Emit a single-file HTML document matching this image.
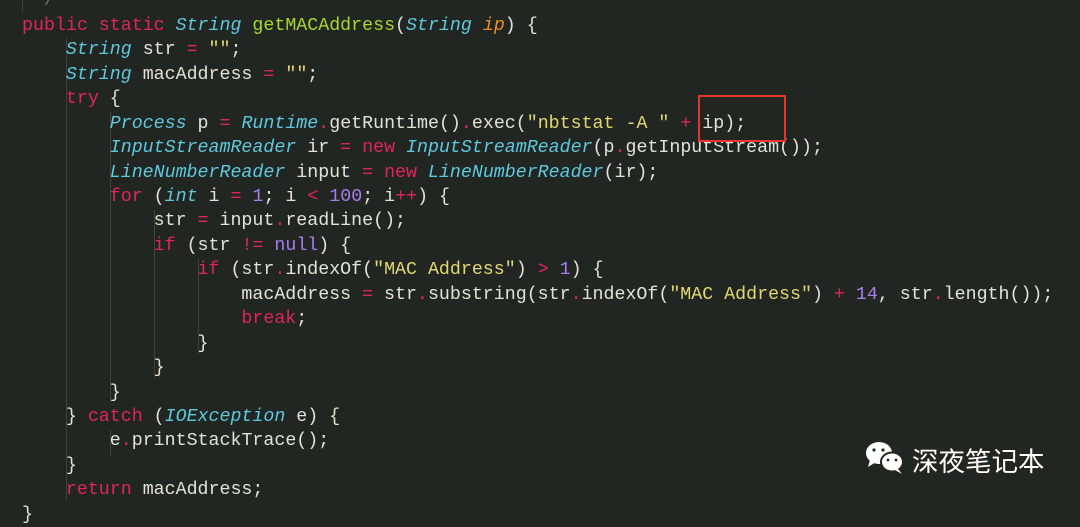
<!DOCTYPE html>
<html><head><meta charset="utf-8"><style>
html,body{margin:0;padding:0}
body{width:1080px;height:509px;background:#222622;overflow:hidden;position:relative;font-family:"Liberation Mono",monospace;font-size:18.3px;color:#e2e2da}
.l{position:absolute;left:22px;height:24.45px;line-height:24.45px;white-space:pre}
.k{color:#e0245e}.t{color:#5ec8dc;font-style:italic}.f{color:#a6d82e}.s{color:#e2d872}.n{color:#a67ef0}.p{color:#f08a20;font-style:italic}.c{color:#6a6a60}
.g{position:absolute;width:1px;background:#3e423c}
.box{position:absolute;left:698px;top:95px;width:84px;height:43px;border:2px solid #e8352f}
.wm{position:absolute;left:912px;top:445px;font-family:"Liberation Sans","Noto Sans CJK SC",sans-serif;font-size:26.5px;color:#fff;line-height:34px}
</style></head><body>
<div class="g" style="left:22px;top:0;height:12px"></div>
<div class="g" style="left:66px;top:38px;height:462px"></div>
<div class="g" style="left:110px;top:112px;height:290px"></div>
<div class="g" style="left:110px;top:430px;height:26px"></div>
<div class="g" style="left:154px;top:210px;height:168px"></div>
<div class="g" style="left:198px;top:258px;height:96px"></div>
<div class="l c" style="top:-10.6px"> */</div>
<div class="l" style="top:13.8px"><span class="k">public static</span> <span class="t">String</span> <span class="f">getMACAddress</span>(<span class="t">String</span> <span class="p">ip</span>) {</div>
<div class="l" style="top:38.25px">    <span class="t">String</span> str <span class="k">=</span> <span class="s">""</span>;</div>
<div class="l" style="top:62.7px">    <span class="t">String</span> macAddress <span class="k">=</span> <span class="s">""</span>;</div>
<div class="l" style="top:87.15px">    <span class="k">try</span> {</div>
<div class="l" style="top:111.6px">        <span class="t">Process</span> p <span class="k">=</span> <span class="t">Runtime</span><span class="k">.</span>getRuntime()<span class="k">.</span>exec(<span class="s">"nbtstat -A "</span> <span class="k">+</span> ip);</div>
<div class="l" style="top:136.05px">        <span class="t">InputStreamReader</span> ir <span class="k">=</span> <span class="k">new</span> <span class="t">InputStreamReader</span>(p<span class="k">.</span>getInputStream());</div>
<div class="l" style="top:160.5px">        <span class="t">LineNumberReader</span> input <span class="k">=</span> <span class="k">new</span> <span class="t">LineNumberReader</span>(ir);</div>
<div class="l" style="top:184.95px">        <span class="k">for</span> (<span class="t">int</span> i <span class="k">=</span> <span class="n">1</span>; i <span class="k">&lt;</span> <span class="n">100</span>; i<span class="k">++</span>) {</div>
<div class="l" style="top:209.4px">            str <span class="k">=</span> input<span class="k">.</span>readLine();</div>
<div class="l" style="top:233.85px">            <span class="k">if</span> (str <span class="k">!=</span> <span class="n">null</span>) {</div>
<div class="l" style="top:258.3px">                <span class="k">if</span> (str<span class="k">.</span>indexOf(<span class="s">"MAC Address"</span>) <span class="k">&gt;</span> <span class="n">1</span>) {</div>
<div class="l" style="top:282.75px">                    macAddress <span class="k">=</span> str<span class="k">.</span>substring(str<span class="k">.</span>indexOf(<span class="s">"MAC Address"</span>) <span class="k">+</span> <span class="n">14</span>, str<span class="k">.</span>length());</div>
<div class="l" style="top:307.2px">                    <span class="k">break</span>;</div>
<div class="l" style="top:331.65px">                }</div>
<div class="l" style="top:356.1px">            }</div>
<div class="l" style="top:380.55px">        }</div>
<div class="l" style="top:405px">    } <span class="k">catch</span> (<span class="t">IOException</span> e) {</div>
<div class="l" style="top:429.45px">        e<span class="k">.</span>printStackTrace();</div>
<div class="l" style="top:453.9px">    }</div>
<div class="l" style="top:478.35px">    <span class="k">return</span> macAddress;</div>
<div class="l" style="top:502.8px">}</div>
<div class="box"></div>
<svg style="position:absolute;left:864px;top:440px" width="44" height="36" viewBox="0 0 44 36">
<ellipse cx="15" cy="13" rx="13" ry="11" fill="#fff"/>
<path d="M6 20 L4 27 L12 22 Z" fill="#fff"/>
<ellipse cx="28" cy="22" rx="11" ry="9.5" fill="#fff" stroke="#222622" stroke-width="2"/>
<path d="M34 29 L38 34 L31 30 Z" fill="#fff"/>
<circle cx="10" cy="10" r="1.6" fill="#222622"/><circle cx="19" cy="10" r="1.6" fill="#222622"/>
<circle cx="24" cy="20" r="1.4" fill="#222622"/><circle cx="32" cy="20" r="1.4" fill="#222622"/>
</svg>
<div class="wm">深夜笔记本</div>
</body></html>
